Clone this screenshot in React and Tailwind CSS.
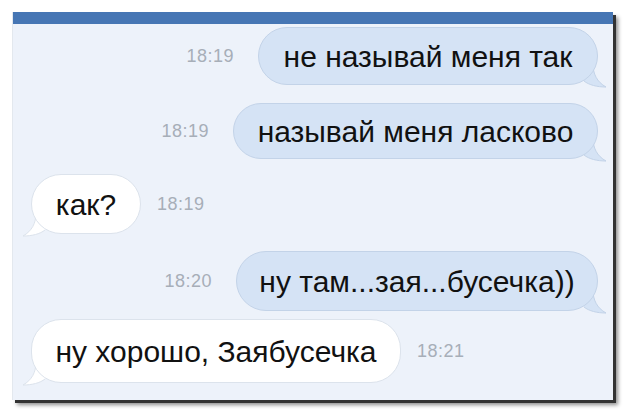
import React from "react";

const font = { fontFamily: '"Liberation Sans", Arial, sans-serif' };

function Tail({ side, fill, stroke }) {
  // curled tail at the bottom corner of a bubble
  if (side === "right") {
    return (
      <svg className="absolute -right-[9px] bottom-[-3px]" width="24" height="26" viewBox="0 0 24 26">
        <path d="M0 0 L10 0 C10 12 14 20 23 25 C14 25 6 23 0 18 Z" fill={fill} />
        <path d="M10 2 C10 12 14 20 23 25 C14 25 6 23 1 19" fill="none" stroke={stroke} strokeWidth="1" />
      </svg>
    );
  }
  return (
    <svg className="absolute -left-[9px] bottom-[-3px]" width="24" height="26" viewBox="0 0 24 26">
      <path d="M24 0 L14 0 C14 12 10 20 1 25 C10 25 18 23 24 18 Z" fill={fill} />
      <path d="M14 2 C14 12 10 20 1 25 C10 25 18 23 23 19" fill="none" stroke={stroke} strokeWidth="1" />
    </svg>
  );
}

function Out({ text, time, h, mt, w }) {
  return (
    <div className="flex items-center justify-end pr-[15px]" style={{ marginTop: mt }}>
      <span className="mr-[24px] text-[18px] text-[#a7aeb8] tracking-[0.5px]" style={font}>{time}</span>
      <div className="relative">
        <Tail side="right" fill="#d5e3f5" stroke="#c3d3e8" />
        <div
          className="relative flex items-center justify-center rounded-[30px] border border-[#c3d3e8] bg-[#d5e3f5] text-[#111] text-[30px]"
          style={{ ...font, height: h, width: w }}
        >
          {text}
        </div>
      </div>
    </div>
  );
}

function In({ text, time, h, mt, w }) {
  return (
    <div className="flex items-center justify-start pl-[18px]" style={{ marginTop: mt }}>
      <div className="relative">
        <Tail side="left" fill="#ffffff" stroke="#dce3ec" />
        <div
          className="relative flex items-center justify-center rounded-[30px] border border-[#dce3ec] bg-white text-[#111] text-[30px]"
          style={{ ...font, height: h, width: w }}
        >
          {text}
        </div>
      </div>
      <span className="ml-[16px] text-[18px] text-[#a7aeb8] tracking-[0.5px]" style={font}>{time}</span>
    </div>
  );
}

export default function App() {
  return (
    <div className="w-[625px] h-[412px] bg-white pt-[12px] pl-[12px]">
      <div className="relative w-[601px] h-[388px] shadow-[3px_3px_0_#333,5px_5px_4px_rgba(0,0,0,0.45)] border-l border-[#e3e8ee] bg-[#edf2fa] flex flex-col overflow-hidden">
        <div className="h-[12px] bg-[#4676b4] shrink-0" />
        <Out text="не называй меня так" time="18:19" h={58} mt={3} w={340} />
        <Out text="называй меня ласково" time="18:19" h={56} mt={18} w={365} />
        <In text="как?" time="18:19" h={60} mt={15} w={110} />
        <Out text="ну там...зая...бусечка))" time="18:20" h={60} mt={17} w={362} />
        <In text="ну хорошо, Заябусечка" time="18:21" h={64} mt={8} w={370} />
      </div>
    </div>
  );
}
